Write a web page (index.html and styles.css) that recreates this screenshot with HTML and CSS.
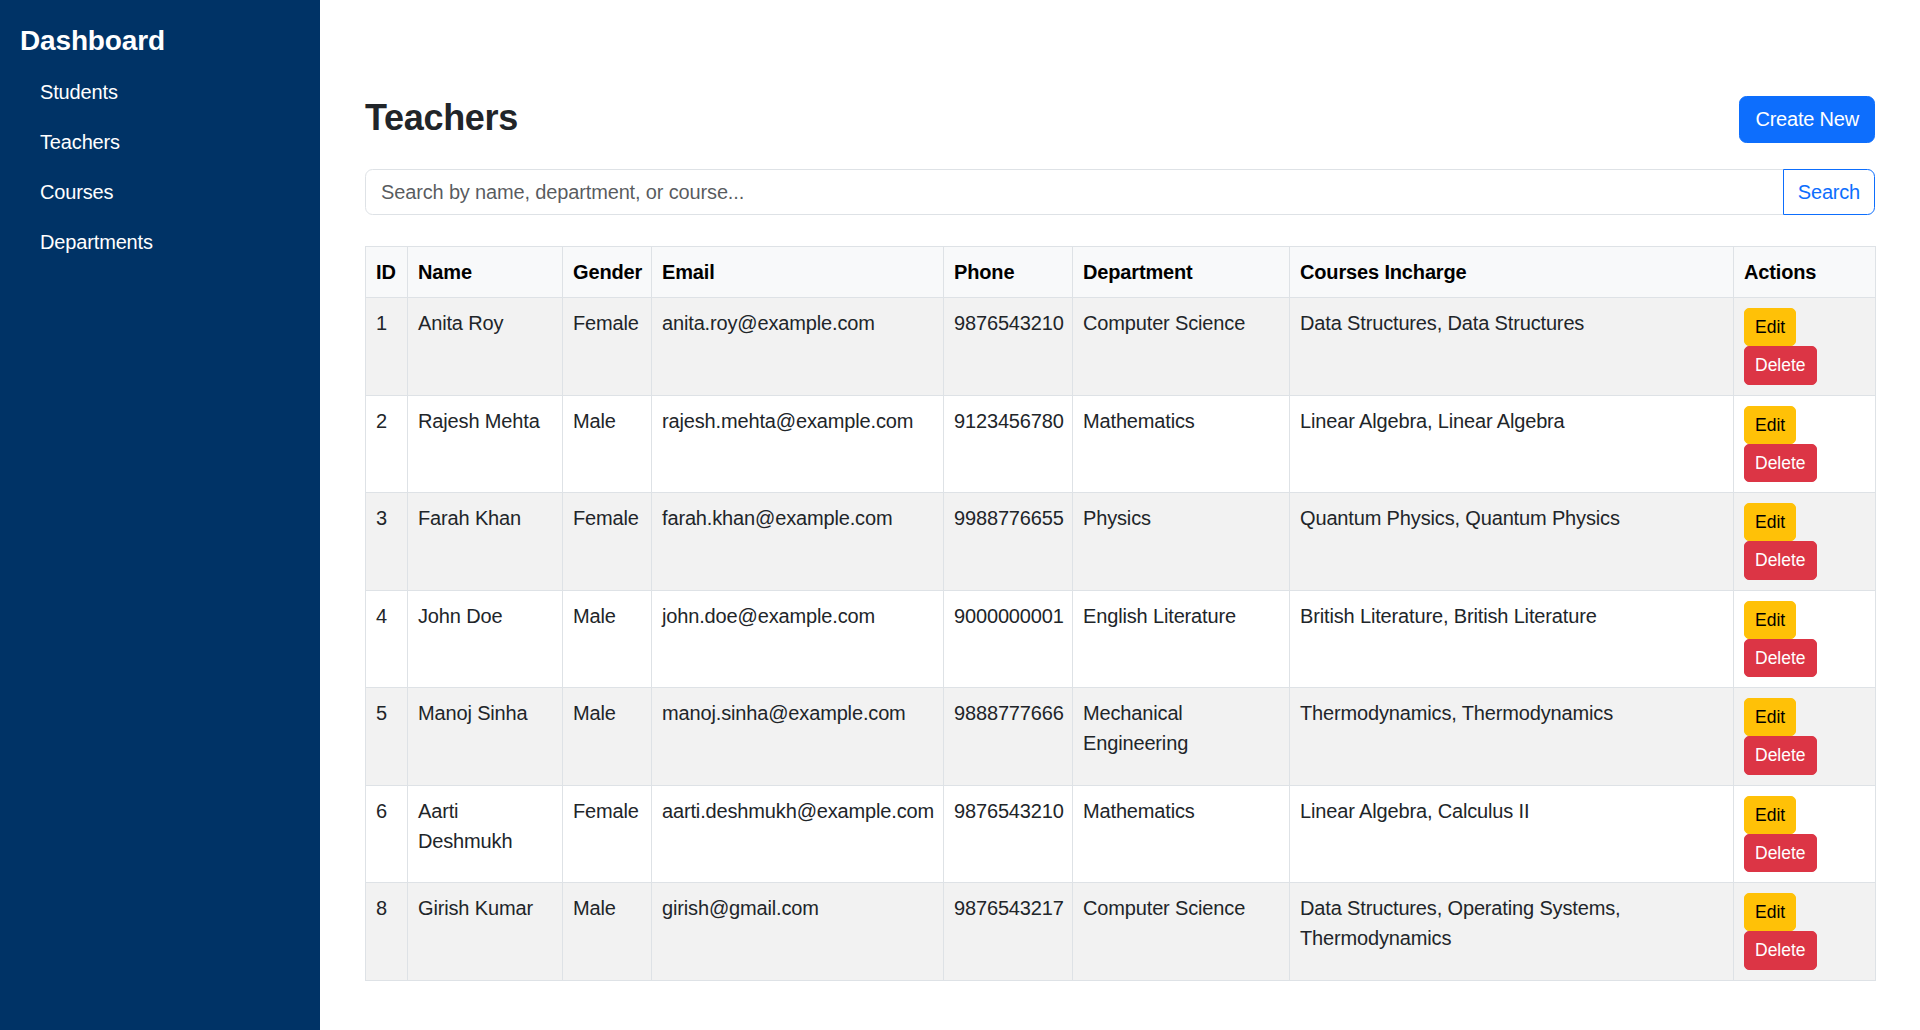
FILE: index.html
```html
<!DOCTYPE html>
<html lang="en">
<head>
<meta charset="utf-8">
<title>Teachers</title>
<link rel="stylesheet" href="styles.css">
</head>
<body>
<div class="layout">
  <aside class="sidebar">
    <h2 class="brand">Dashboard</h2>
    <nav class="nav">
      <a class="nav-link" href="#">Students</a>
      <a class="nav-link" href="#">Teachers</a>
      <a class="nav-link" href="#">Courses</a>
      <a class="nav-link" href="#">Departments</a>
    </nav>
  </aside>
  <main class="main">
    <div class="page-head">
      <h1 class="page-title">Teachers</h1>
      <button class="btn btn-primary" type="button">Create New</button>
    </div>
    <form class="search" onsubmit="return false">
      <input class="search-input" type="text" placeholder="Search by name, department, or course...">
      <button class="btn btn-outline" type="submit">Search</button>
    </form>
    <table class="data-table">
      <colgroup>
        <col class="col-id"><col class="col-name"><col class="col-gender"><col class="col-email">
        <col class="col-phone"><col class="col-dept"><col class="col-courses"><col class="col-actions">
      </colgroup>
      <thead>
        <tr><th>ID</th><th>Name</th><th>Gender</th><th>Email</th><th>Phone</th><th>Department</th><th>Courses Incharge</th><th>Actions</th></tr>
      </thead>
      <tbody>
        <tr><td>1</td><td>Anita Roy</td><td>Female</td><td>anita.roy@example.com</td><td>9876543210</td><td>Computer Science</td><td>Data Structures, Data Structures</td><td><div class="actions"><button class="btn-sm btn-warning" type="button">Edit</button><button class="btn-sm btn-danger" type="button">Delete</button></div></td></tr>
        <tr><td>2</td><td>Rajesh Mehta</td><td>Male</td><td>rajesh.mehta@example.com</td><td>9123456780</td><td>Mathematics</td><td>Linear Algebra, Linear Algebra</td><td><div class="actions"><button class="btn-sm btn-warning" type="button">Edit</button><button class="btn-sm btn-danger" type="button">Delete</button></div></td></tr>
        <tr><td>3</td><td>Farah Khan</td><td>Female</td><td>farah.khan@example.com</td><td>9988776655</td><td>Physics</td><td>Quantum Physics, Quantum Physics</td><td><div class="actions"><button class="btn-sm btn-warning" type="button">Edit</button><button class="btn-sm btn-danger" type="button">Delete</button></div></td></tr>
        <tr><td>4</td><td>John Doe</td><td>Male</td><td>john.doe@example.com</td><td>9000000001</td><td>English Literature</td><td>British Literature, British Literature</td><td><div class="actions"><button class="btn-sm btn-warning" type="button">Edit</button><button class="btn-sm btn-danger" type="button">Delete</button></div></td></tr>
        <tr><td>5</td><td>Manoj Sinha</td><td>Male</td><td>manoj.sinha@example.com</td><td>9888777666</td><td>Mechanical Engineering</td><td>Thermodynamics, Thermodynamics</td><td><div class="actions"><button class="btn-sm btn-warning" type="button">Edit</button><button class="btn-sm btn-danger" type="button">Delete</button></div></td></tr>
        <tr><td>6</td><td>Aarti Deshmukh</td><td>Female</td><td>aarti.deshmukh@example.com</td><td>9876543210</td><td>Mathematics</td><td>Linear Algebra, Calculus II</td><td><div class="actions"><button class="btn-sm btn-warning" type="button">Edit</button><button class="btn-sm btn-danger" type="button">Delete</button></div></td></tr>
        <tr><td>8</td><td>Girish Kumar</td><td>Male</td><td>girish@gmail.com</td><td>9876543217</td><td>Computer Science</td><td>Data Structures, Operating Systems, Thermodynamics</td><td><div class="actions"><button class="btn-sm btn-warning" type="button">Edit</button><button class="btn-sm btn-danger" type="button">Delete</button></div></td></tr>
      </tbody>
    </table>
  </main>
</div>
</body>
</html>
```

FILE: styles.css
```css
html, body {
  margin: 0;
  height: 100%;
}

body {
  font-family: "Liberation Sans", Arial, sans-serif;
  font-size: 20px;
  line-height: 1.5;
  letter-spacing: -0.15px;
  color: #212529;
  background: #fff;
}

.layout {
  display: flex;
  min-height: 100vh;
}

.sidebar {
  width: 320px;
  flex: none;
  box-sizing: border-box;
  padding: 20px;
  background: #003366;
  color: #fff;
}

.brand {
  margin: 3.5px 0 10px;
  font-size: 28px;
  line-height: 1.2;
  font-weight: 700;
}

.nav {
  display: flex;
  flex-direction: column;
}

.nav-link {
  display: block;
  padding: 10px 20px;
  color: #fff;
  text-decoration: none;
}

.main {
  flex: 1;
  min-width: 0;
  padding: 96px 45px 0;
}

.page-head {
  display: flex;
  justify-content: space-between;
  align-items: center;
  margin-bottom: 26px;
}

.page-title {
  margin: -3px 0 0;
  font-size: 36px;
  line-height: 1.2;
  font-weight: 700;
  letter-spacing: -0.3px;
  color: #212529;
}

.btn {
  display: inline-block;
  box-sizing: border-box;
  font-family: inherit;
  font-size: 20px;
  line-height: 30px;
  letter-spacing: -0.2px;
  padding: 7.25px 15px;
  border: 1px solid transparent;
  border-radius: 7.5px;
  cursor: pointer;
}

.btn-primary {
  background: #0d6efd;
  border-color: #0d6efd;
  color: #fff;
}

.search {
  display: flex;
  margin: 0 0 31px;
}

.search-input {
  flex: 1;
  min-width: 0;
  font-family: inherit;
  font-size: 20px;
  line-height: 30px;
  letter-spacing: -0.15px;
  padding: 7.25px 15px;
  border: 1px solid #dee2e6;
  border-radius: 7.5px 0 0 7.5px;
  color: #212529;
  background: #fff;
  outline: none;
}

.search-input::placeholder {
  color: rgba(33, 37, 41, 0.75);
}

.btn-outline {
  margin-left: -1px;
  padding-left: 14px;
  padding-right: 14px;
  background: transparent;
  border-color: #0d6efd;
  color: #0d6efd;
  border-radius: 0 7.5px 7.5px 0;
}

.data-table {
  width: 100%;
  border-collapse: collapse;
  table-layout: fixed;
}

.col-id { width: 42px; }
.col-name { width: 155px; }
.col-gender { width: 89px; }
.col-email { width: 292px; }
.col-phone { width: 129px; }
.col-dept { width: 217px; }
.col-courses { width: 444px; }
.col-actions { width: 142px; }

.data-table th,
.data-table td {
  border: 1px solid #dee2e6;
  padding: 10px;
  text-align: left;
  vertical-align: top;
}

.data-table th {
  background: #f8f9fa;
  color: #000;
  font-weight: 700;
  white-space: nowrap;
}

.data-table tbody tr:nth-child(odd) td {
  background: #f2f2f2;
}

.actions {
  display: flex;
  flex-wrap: wrap;
  align-items: flex-start;
  column-gap: 4px;
}

.btn-sm {
  display: inline-block;
  box-sizing: border-box;
  font-family: inherit;
  font-size: 17.5px;
  line-height: 26.25px;
  padding: 5px 10px;
  border: 1px solid transparent;
  border-radius: 5px;
  cursor: pointer;
}

.btn-warning {
  background: #ffc107;
  border-color: #ffc107;
  color: #000;
}

.btn-danger {
  background: #dc3545;
  border-color: #dc3545;
  color: #fff;
}
```
